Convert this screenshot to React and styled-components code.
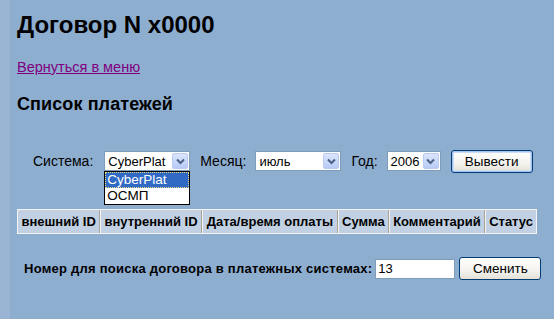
import React from "react";
import styled, { createGlobalStyle } from "styled-components";

const Global = createGlobalStyle`
  html, body { margin: 0; padding: 0; background: #8eaed0; }
  body { font-family: "Liberation Sans", Arial, sans-serif; color: #000; }
`;

const Page = styled.div`
  display: flex;
  min-height: 319px;
  background: #8eaed0;
`;

const Strip = styled.div`
  width: 10px;
  flex: none;
  background: #9ab4d4;
`;

const Main = styled.div`
  flex: 1;
  padding-left: 7px;
  display: flex;
  flex-direction: column;
  align-items: flex-start;
`;

const Title = styled.h1`
  margin: 11px 0 0;
  font-size: 24px;
  line-height: 28px;
  font-weight: bold;
`;

const BackLink = styled.a`
  margin-top: 20px;
  font-size: 14.5px;
  line-height: 17px;
  color: #800080;
  text-decoration: underline;
`;

const SubTitle = styled.h2`
  margin: 18px 0 0;
  font-size: 18px;
  line-height: 21px;
  font-weight: bold;
  letter-spacing: 0.1px;
`;

const FormRow = styled.div`
  margin-top: 34px;
  margin-left: 16px;
  display: flex;
  align-items: center;
  height: 24px;
`;

const Label = styled.span`
  font-size: 14px;
  margin-right: ${(p) => p.$gap || 9}px;
`;

const SelectBox = styled.div`
  position: relative;
  box-sizing: border-box;
  width: ${(p) => p.$w}px;
  height: 20px;
  margin-right: 10px;
  border: 1px solid #7f9db9;
  background: #fff;
  display: flex;
  align-items: center;
  font-size: 13px;
`;

const SelectText = styled.span`
  flex: 1;
  padding-left: 3px;
  white-space: nowrap;
  overflow: hidden;
`;

const ArrowBtn = styled.span`
  width: 16px;
  height: 16px;
  margin-right: 1px;
  box-sizing: border-box;
  border: 1px solid #b9cbf3;
  border-radius: 2px;
  background: linear-gradient(#dbe5fd, #b7cbf6);
  display: flex;
  align-items: center;
  justify-content: center;
`;

const DropList = styled.div`
  position: absolute;
  left: -1px;
  top: 19px;
  width: 86px;
  box-sizing: border-box;
  border: 1px solid #000;
  background: #fff;
  z-index: 2;
`;

const DropItem = styled.div`
  height: 16px;
  line-height: 16px;
  padding-left: 2px;
  font-size: 13.5px;
  box-sizing: border-box;
  background: ${(p) => (p.$active ? "#316ac5" : "#fff")};
  color: ${(p) => (p.$active ? "#fff" : "#000")};
  outline: ${(p) => (p.$active ? "1px dotted #f0e080" : "none")};
  outline-offset: -1px;
`;

const XPButton = styled.button`
  box-sizing: border-box;
  width: ${(p) => p.$w}px;
  height: ${(p) => p.$h || 23}px;
  border: 1px solid #003c74;
  border-radius: 3px;
  background: linear-gradient(#ffffff 0%, #f4f3ee 60%, #e3e0d6 100%);
  box-shadow: ${(p) =>
    p.$focus ? "inset 0 0 0 1px #a8c3ee, inset 0 0 0 2px #cddcf6" : "none"};
  font-family: "Liberation Sans", Arial, sans-serif;
  font-size: 13.5px;
  color: #000;
  padding: 0;
`;

const Table = styled.table`
  margin-top: 36px;
  border-collapse: separate;
  border-spacing: 0;
  border: 1px solid #f3f3f3;
  width: 520px;
`;

const Th = styled.th`
  box-sizing: border-box;
  width: ${(p) => p.$w}px;
  height: 23px;
  padding: 0 3px;
  background: #c1d1e3;
  font-size: 13px;
  font-weight: bold;
  white-space: nowrap;
  text-align: center;
  border-left: 1px solid #f3f3f3;
  border-right: 1px solid #a9a393;
  &:first-child { border-left: none; }
  &:last-child { border-right: none; }
`;

const BottomRow = styled.div`
  margin-top: 23px;
  margin-left: 7px;
  display: flex;
  align-items: center;
`;

const BoldLabel = styled.span`
  font-size: 13px;
  font-weight: bold;
  letter-spacing: 0.24px;
  margin-right: 3px;
`;

const TextInput = styled.div`
  box-sizing: border-box;
  width: 80px;
  height: 20px;
  border: 1px solid #7f9db9;
  background: #fff;
  font-size: 13px;
  line-height: 18px;
  padding-left: 2px;
  margin-right: 4px;
`;

const Chevron = () => (
  <svg width="9" height="7" viewBox="0 0 9 7">
    <path d="M1 1.5 L4.5 5 L8 1.5" fill="none" stroke="#4d6185" strokeWidth="2" />
  </svg>
);

const Select = ({ w, value, children }) => (
  <SelectBox $w={w}>
    <SelectText>{value}</SelectText>
    <ArrowBtn>
      <Chevron />
    </ArrowBtn>
    {children}
  </SelectBox>
);

const headers = [
  ["внешний ID", 83],
  ["внутренний ID", 102],
  ["Дата/время оплаты", 138],
  ["Сумма", 49],
  ["Комментарий", 97],
  ["Статус", 51],
];

export default function App() {
  return (
    <>
      <Global />
      <Page>
        <Strip />
        <Main>
          <Title>Договор N x0000</Title>
          <BackLink href="#">Вернуться в меню</BackLink>
          <SubTitle>Список платежей</SubTitle>
          <FormRow>
            <Label $gap={11}>Система:</Label>
            <Select w={86} value="CyberPlat">
              <DropList>
                <DropItem $active>CyberPlat</DropItem>
                <DropItem>ОСМП</DropItem>
              </DropList>
            </Select>
            <Label>Месяц:</Label>
            <Select w={86} value="июль" />
            <Label>Год:</Label>
            <Select w={54} value="2006" />
            <XPButton $w={82} $h={23} $focus>Вывести</XPButton>
          </FormRow>
          <Table>
            <thead>
              <tr>
                {headers.map(([t, w]) => (
                  <Th key={t} $w={w}>{t}</Th>
                ))}
              </tr>
            </thead>
          </Table>
          <BottomRow>
            <BoldLabel>Номер для поиска договора в платежных системах:</BoldLabel>
            <TextInput>13</TextInput>
            <XPButton $w={82} $h={23}>Сменить</XPButton>
          </BottomRow>
        </Main>
      </Page>
    </>
  );
}
